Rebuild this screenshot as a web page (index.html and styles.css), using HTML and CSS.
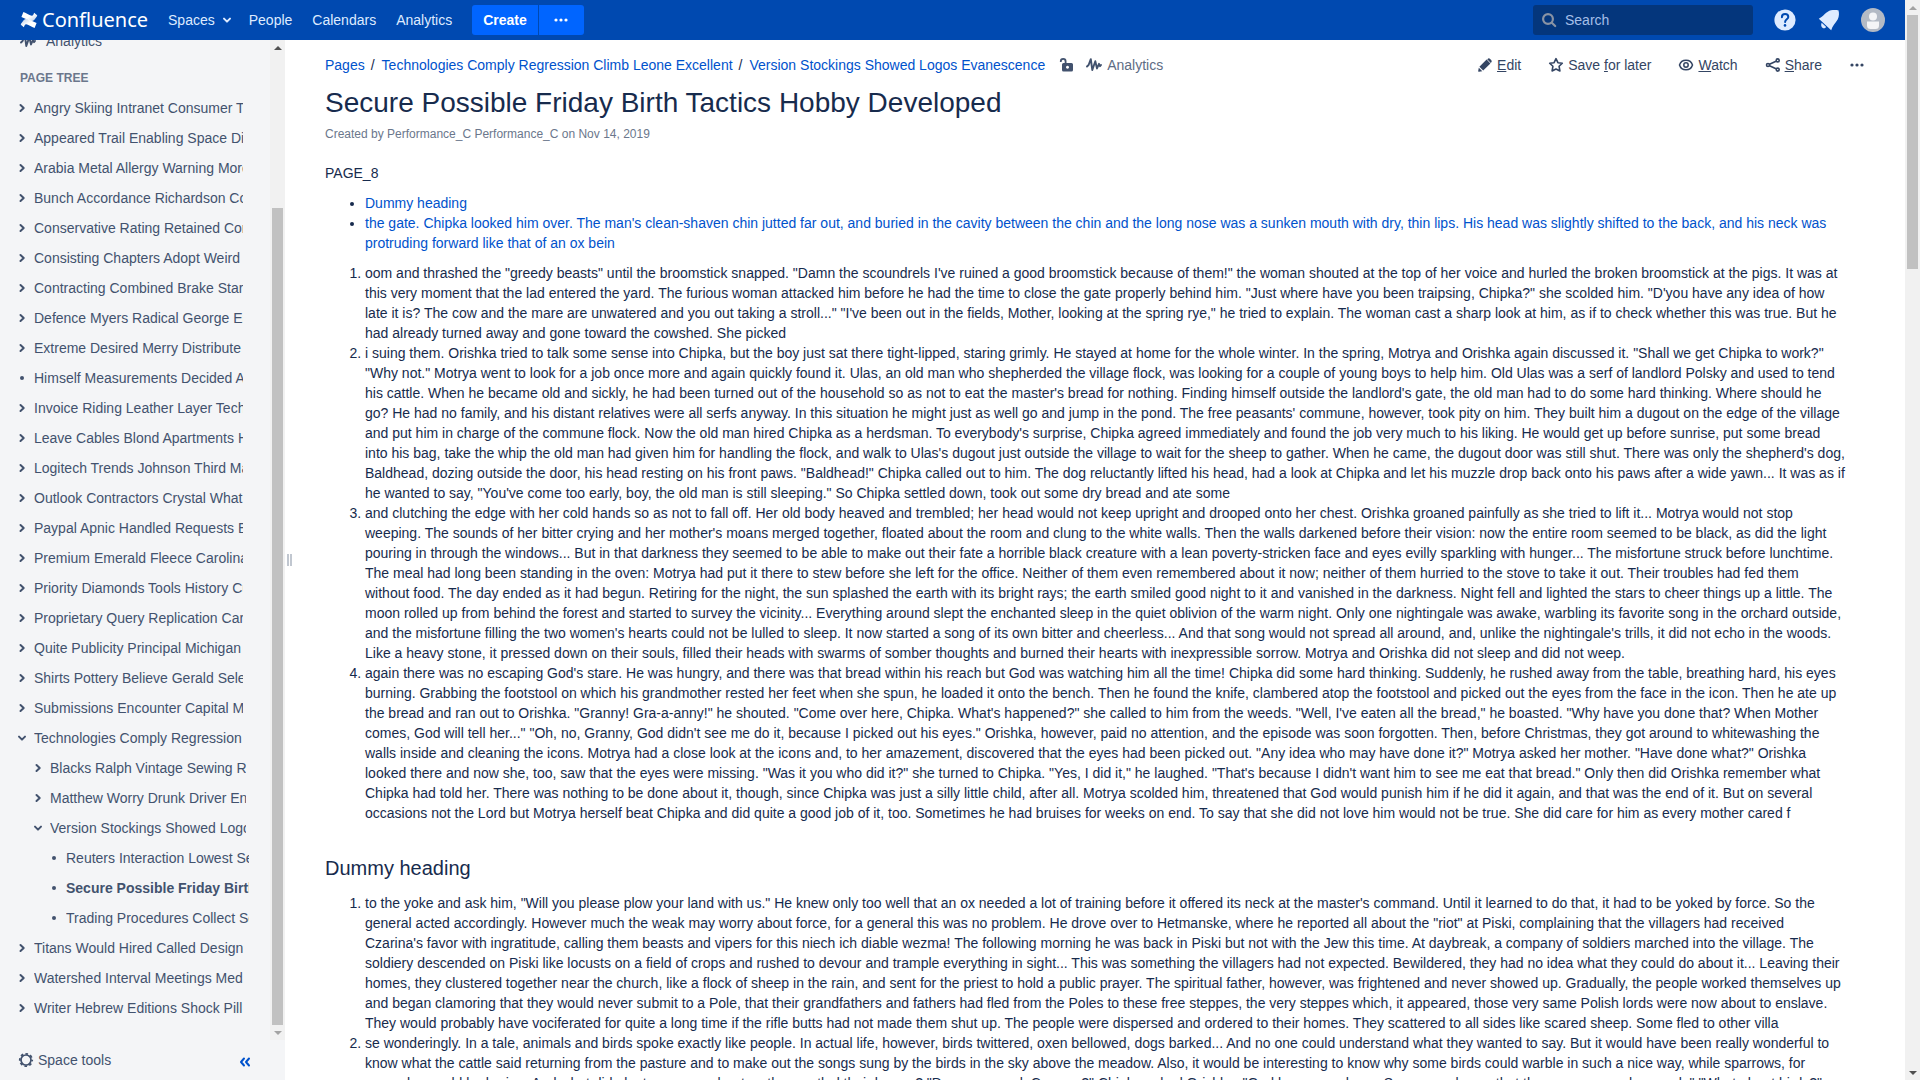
FILE: index.html
```html
<!DOCTYPE html>
<html lang="en">
<head>
<meta charset="utf-8">
<title>Secure Possible Friday Birth Tactics Hobby Developed - Confluence</title>
<link rel="stylesheet" href="styles.css">
</head>
<body>
<svg class="sprite" aria-hidden="true">
  <symbol id="right" viewBox="0 0 16 16"><path d="M6.5 5l3.2 3-3.2 3" fill="none" stroke="currentColor" stroke-width="2" stroke-linecap="round" stroke-linejoin="round"/></symbol>
  <symbol id="down" viewBox="0 0 16 16"><path d="M5 6.6l3 3 3-3" fill="none" stroke="currentColor" stroke-width="2" stroke-linecap="round" stroke-linejoin="round"/></symbol>
  <symbol id="dot" viewBox="0 0 16 16"><circle cx="8" cy="8" r="2" fill="currentColor"/></symbol>
  <symbol id="dots" viewBox="0 0 16 16"><g fill="currentColor"><circle cx="3" cy="8" r="1.6"/><circle cx="8" cy="8" r="1.6"/><circle cx="13" cy="8" r="1.6"/></g></symbol>
  <symbol id="pulse" viewBox="0 0 16 16"><path d="M1 9.5L2.6 8 4.8 2.2 6.3 13 9.3 4.2 11 11.5 13 6.8 14 9.2 15 8" fill="none" stroke="currentColor" stroke-width="1.9" stroke-linecap="round" stroke-linejoin="round"/></symbol>
</svg>
<div class="window">
  <div class="app">
    <header class="topbar">
      <a class="logo" href="#">
        <svg width="18" height="18" viewBox="0 0 18 18">
          <defs><linearGradient id="g1" x1="1" y1="1" x2="0" y2="0"><stop offset="0" stop-color="#fff"/><stop offset=".5" stop-color="#fff"/><stop offset="1" stop-color="#fff" stop-opacity=".7"/></linearGradient>
          <linearGradient id="g2" x1="0" y1="0" x2="1" y2="1"><stop offset="0" stop-color="#fff"/><stop offset=".5" stop-color="#fff"/><stop offset="1" stop-color="#fff" stop-opacity=".7"/></linearGradient></defs>
          <path d="M1 12.8L3.600 9.200C5.600 7 8.400 8.200 11 9.500L16.600 12 14.600 17C11.600 15.800 8 13.600 6.200 13.300 5 13.200 4.600 14.400 3.900 16.300L.8 13.800Z" fill="url(#g1)"/>
          <path d="M17 5.200L14.400 8.800C12.400 11 9.600 9.800 7 8.500L1.400 6 3.400 1C6.400 2.200 10 4.400 11.800 4.700 13 4.800 13.400 3.600 14.100 1.700L17.200 4.200Z" fill="url(#g2)"/>
        </svg>
        <span>Confluence</span>
      </a>
      <nav class="menu">
        <a href="#">Spaces<svg class="icon"><use href="#down"/></svg></a>
        <a href="#">People</a>
        <a href="#">Calendars</a>
        <a href="#">Analytics</a>
      </nav>
      <div class="create">
        <button type="button" class="create-main">Create</button>
        <button type="button" class="create-more" aria-label="Create from template"><svg class="icon"><use href="#dots"/></svg></button>
      </div>
      <label class="search">
        <svg class="icon" viewBox="0 0 16 16"><g fill="none" stroke="currentColor" stroke-width="2.2" stroke-linecap="round"><circle cx="7" cy="7" r="4.9"/><path d="M10.8 10.8l3.4 3.2"/></g></svg>
        <input type="text" placeholder="Search" aria-label="Search">
      </label>
      <div class="tools">
        <button type="button" aria-label="Help"><svg width="24" height="24" viewBox="0 0 24 24"><circle cx="12" cy="12" r="10.6" fill="#deebff"/><path d="M8.9 9.2C8.9 7.200 10.200 6 12.100 6s3.200 1.200 3.200 2.900c0 2.300-3.200 2.600-3.200 5.100" fill="none" stroke="#0049b0" stroke-width="2" stroke-linecap="round"/><circle cx="12" cy="17.400" r="1.300" fill="#0049b0"/></svg></button>
        <button type="button" aria-label="Notifications"><svg width="24" height="24" viewBox="0 0 24 24"><path d="M1.800 10.800C6 8.500 9.500 3.200 14 2.200 17 1.600 20 2 21.400 2.200 22.300 4.500 22.200 8.500 20.800 11.300 18.600 15 15.300 18 14.200 22.300Z" fill="#deebff"/><path d="M4.700 14.800L9.200 18.900C7.800 20.900 5.600 20.600 4.600 18.800 4 17.500 4.100 16 4.700 14.800Z" fill="#deebff"/></svg></button>
        <button type="button" aria-label="Profile"><svg width="24" height="24" viewBox="0 0 24 24"><circle cx="12" cy="12" r="12" fill="#b3bac5"/><circle cx="12" cy="8.500" r="4" fill="#f4f5f7"/><path d="M6 13.500h12V17.500a3.500 3.500 0 0 1-3.500 3.500h-5A3.500 3.500 0 0 1 6 17.500Z" fill="#f4f5f7"/></svg></button>
      </div>
    </header>
    <div class="body">
      <aside class="sidebar">
        <div class="side-main">
          <div class="side-scroll">
            <a class="side-link" href="#"><svg class="icon"><use href="#pulse"/></svg>Analytics</a>
            <h5>Page tree</h5>
            <ul class="tree">
              <li><svg class="icon"><use href="#right"/></svg><a href="#">Angry Skiing Intranet Consumer Tool</a></li>
              <li><svg class="icon"><use href="#right"/></svg><a href="#">Appeared Trail Enabling Space Disk</a></li>
              <li><svg class="icon"><use href="#right"/></svg><a href="#">Arabia Metal Allergy Warning More</a></li>
              <li><svg class="icon"><use href="#right"/></svg><a href="#">Bunch Accordance Richardson Cost</a></li>
              <li><svg class="icon"><use href="#right"/></svg><a href="#">Conservative Rating Retained Cork</a></li>
              <li><svg class="icon"><use href="#right"/></svg><a href="#">Consisting Chapters Adopt Weird</a></li>
              <li><svg class="icon"><use href="#right"/></svg><a href="#">Contracting Combined Brake Start</a></li>
              <li><svg class="icon"><use href="#right"/></svg><a href="#">Defence Myers Radical George End</a></li>
              <li><svg class="icon"><use href="#right"/></svg><a href="#">Extreme Desired Merry Distribute</a></li>
              <li><svg class="icon"><use href="#dot"/></svg><a href="#">Himself Measurements Decided Air</a></li>
              <li><svg class="icon"><use href="#right"/></svg><a href="#">Invoice Riding Leather Layer Tech</a></li>
              <li><svg class="icon"><use href="#right"/></svg><a href="#">Leave Cables Blond Apartments Hot</a></li>
              <li><svg class="icon"><use href="#right"/></svg><a href="#">Logitech Trends Johnson Third Mat</a></li>
              <li><svg class="icon"><use href="#right"/></svg><a href="#">Outlook Contractors Crystal What</a></li>
              <li><svg class="icon"><use href="#right"/></svg><a href="#">Paypal Apnic Handled Requests Else</a></li>
              <li><svg class="icon"><use href="#right"/></svg><a href="#">Premium Emerald Fleece Carolina</a></li>
              <li><svg class="icon"><use href="#right"/></svg><a href="#">Priority Diamonds Tools History Cut</a></li>
              <li><svg class="icon"><use href="#right"/></svg><a href="#">Proprietary Query Replication Cart</a></li>
              <li><svg class="icon"><use href="#right"/></svg><a href="#">Quite Publicity Principal Michigan</a></li>
              <li><svg class="icon"><use href="#right"/></svg><a href="#">Shirts Pottery Believe Gerald Select</a></li>
              <li><svg class="icon"><use href="#right"/></svg><a href="#">Submissions Encounter Capital Map</a></li>
              <li><svg class="icon"><use href="#down"/></svg><a href="#">Technologies Comply Regression</a>
                <ul>
                  <li><svg class="icon"><use href="#right"/></svg><a href="#">Blacks Ralph Vintage Sewing Run</a></li>
                  <li><svg class="icon"><use href="#right"/></svg><a href="#">Matthew Worry Drunk Driver End</a></li>
                  <li><svg class="icon"><use href="#down"/></svg><a href="#">Version Stockings Showed Logos</a>
                    <ul>
                      <li><svg class="icon"><use href="#dot"/></svg><a href="#">Reuters Interaction Lowest Sea</a></li>
                      <li><svg class="icon"><use href="#dot"/></svg><a href="#" class="current">Secure Possible Friday Birth</a></li>
                      <li><svg class="icon"><use href="#dot"/></svg><a href="#">Trading Procedures Collect Set</a></li>
                    </ul>
                  </li>
                </ul>
              </li>
              <li><svg class="icon"><use href="#right"/></svg><a href="#">Titans Would Hired Called Design</a></li>
              <li><svg class="icon"><use href="#right"/></svg><a href="#">Watershed Interval Meetings Med</a></li>
              <li><svg class="icon"><use href="#right"/></svg><a href="#">Writer Hebrew Editions Shock Pill</a></li>
            </ul>
          </div>
          <div class="scrollbar side-bar" aria-hidden="true"><i class="up dark"></i><b></b><i class="down"></i></div>
        </div>
        <div class="side-foot">
          <button type="button" class="space-tools"><svg class="icon" viewBox="0 0 16 16"><circle cx="8" cy="8" r="5" fill="none" stroke="currentColor" stroke-width="1.700"/><circle cx="8" cy="8" r="6.200" fill="none" stroke="currentColor" stroke-width="1.800" stroke-dasharray="2.600 2.270" stroke-dashoffset="1.300"/></svg>Space tools</button>
          <button type="button" class="collapse" aria-label="Collapse sidebar"><svg class="icon" viewBox="0 0 16 16"><path d="M7 6.500L4 10l3 3.500M12 6.500L9 10l3 3.500" fill="none" stroke="currentColor" stroke-width="2" stroke-linecap="round" stroke-linejoin="round"/></svg></button>
        </div>
      </aside>
      <div class="splitter" aria-hidden="true"><i></i><i></i></div>
      <main class="content">
        <div class="page-head">
          <nav class="crumbs">
            <a href="#">Pages</a><span>/</span><a href="#">Technologies Comply Regression Climb Leone Excellent</a><span>/</span><a href="#">Version Stockings Showed Logos Evanescence</a>
            <svg class="icon lock" viewBox="0 0 16 16"><path d="M1.800 5V4.200a2.400 2.400 0 0 1 4.800 0V7" fill="none" stroke="currentColor" stroke-width="1.800"/><path fill-rule="evenodd" d="M4.500 6H12.500A1.500 1.500 0 0 1 14 7.500V13A1.500 1.500 0 0 1 12.500 14.500H4.500A1.500 1.500 0 0 1 3 13V7.500A1.500 1.500 0 0 1 4.500 6ZM8.500 8.700a1.500 1.500 0 1 0 .010 0Z" fill="currentColor"/></svg>
            <a class="stats" href="#"><svg class="icon"><use href="#pulse"/></svg>Analytics</a>
          </nav>
          <div class="actions">
            <button type="button"><svg class="icon" viewBox="0 0 16 16"><path d="M2.400 9.800L9.600 2.600 13.400 6.400 6.200 13.600ZM10.600 1.900a1.800 1.800 0 0 1 2.500 0l1.100 1.100a1.800 1.800 0 0 1 0 2.500l-.4.400L10.200 2.300ZM1.800 10.700L5.300 14.200 1.900 14.800C1.300 14.900 1.100 14.700 1.200 14.100Z" fill="currentColor"/></svg><span><u>E</u>dit</span></button>
            <button type="button"><svg class="icon" viewBox="0 0 16 16"><path d="M8 1.700L9.900 5.700 14.300 6.200 11.100 9.300 11.900 14 8 12 4.100 14 4.900 9.300 1.700 6.200 6.100 5.700Z" fill="none" stroke="currentColor" stroke-width="1.600" stroke-linejoin="round"/></svg><span>Save <u>f</u>or later</span></button>
            <button type="button"><svg class="icon" viewBox="0 0 16 16"><g fill="none" stroke="currentColor" stroke-width="1.500"><path d="M1.500 8C2.400 5 5 3.200 8 3.200S13.600 5 14.500 8C13.600 11 11 12.800 8 12.800S2.400 11 1.500 8Z"/><circle cx="8" cy="8" r="2.200"/></g></svg><span><u>W</u>atch</span></button>
            <button type="button"><svg class="icon" viewBox="0 0 16 16"><g fill="none" stroke="currentColor" stroke-width="1.600"><path d="M4.500 7.200L11 4.200M4.500 8.800L11 11.800"/><circle cx="3" cy="8" r="1.500"/><circle cx="12.700" cy="3.400" r="1.500"/><circle cx="12.700" cy="12.600" r="1.500"/></g></svg><span><u>S</u>hare</span></button>
            <button type="button" aria-label="More actions"><svg class="icon"><use href="#dots"/></svg></button>
          </div>
        </div>
        <h1>Secure Possible Friday Birth Tactics Hobby Developed</h1>
        <p class="meta">Created by Performance_C Performance_C on Nov 14, 2019</p>
        <article>
          <p>PAGE_8</p>
          <ul>
            <li><a href="#">Dummy heading</a></li>
            <li><a href="#">the gate. Chipka looked him over. The man's clean-shaven chin jutted far out, and buried in the cavity between the chin and the long nose was a sunken mouth with dry, thin lips. His head was slightly shifted to the back, and his neck was protruding forward like that of an ox bein</a></li>
          </ul>
          <ol>
            <li>oom and thrashed the "greedy beasts" until the broomstick snapped. "Damn the scoundrels I've ruined a good broomstick because of them!" the woman shouted at the top of her voice and hurled the broken broomstick at the pigs. It was at this very moment that the lad entered the yard. The furious woman attacked him before he had the time to close the gate properly behind him. "Just where have you been traipsing, Chipka?" she scolded him. "D'you have any idea of how late it is? The cow and the mare are unwatered and you out taking a stroll..." "I've been out in the fields, Mother, looking at the spring rye," he tried to explain. The woman cast a sharp look at him, as if to check whether this was true. But he had already turned away and gone toward the cowshed. She picked</li>
            <li>i suing them. Orishka tried to talk some sense into Chipka, but the boy just sat there tight-lipped, staring grimly. He stayed at home for the whole winter. In the spring, Motrya and Orishka again discussed it. "Shall we get Chipka to work?" "Why not." Motrya went to look for a job once more and again quickly found it. Ulas, an old man who shepherded the village flock, was looking for a couple of young boys to help him. Old Ulas was a serf of landlord Polsky and used to tend his cattle. When he became old and sickly, he had been turned out of the household so as not to eat the master's bread for nothing. Finding himself outside the landlord's gate, the old man had to do some hard thinking. Where should he go? He had no family, and his distant relatives were all serfs anyway. In this situation he might just as well go and jump in the pond. The free peasants' commune, however, took pity on him. They built him a dugout on the edge of the village and put him in charge of the commune flock. Now the old man hired Chipka as a herdsman. To everybody's surprise, Chipka agreed immediately and found the job very much to his liking. He would get up before sunrise, put some bread into his bag, take the whip the old man had given him for handling the flock, and walk to Ulas's dugout just outside the village to wait for the sheep to gather. When he came, the dugout door was still shut. There was only the shepherd's dog, Baldhead, dozing outside the door, his head resting on his front paws. "Baldhead!" Chipka called out to him. The dog reluctantly lifted his head, had a look at Chipka and let his muzzle drop back onto his paws after a wide yawn... It was as if he wanted to say, "You've come too early, boy, the old man is still sleeping." So Chipka settled down, took out some dry bread and ate some</li>
            <li>and clutching the edge with her cold hands so as not to fall off. Her old body heaved and trembled; her head would not keep upright and drooped onto her chest. Orishka groaned painfully as she tried to lift it... Motrya would not stop weeping. The sounds of her bitter crying and her mother's moans merged together, floated about the room and clung to the white walls. Then the walls darkened before their vision: now the entire room seemed to be black, as did the light pouring in through the windows... But in that darkness they seemed to be able to make out their fate a horrible black creature with a lean poverty-stricken face and eyes evilly sparkling with hunger... The misfortune struck before lunchtime. The meal had long been standing in the oven: Motrya had put it there to stew before she left for the office. Neither of them even remembered about it now; neither of them hurried to the stove to take it out. Their troubles had fed them without food. The day ended as it had begun. Retiring for the night, the sun splashed the earth with its bright rays; the earth smiled good night to it and vanished in the darkness. Night fell and lighted the stars to cheer things up a little. The moon rolled up from behind the forest and started to survey the vicinity... Everything around slept the enchanted sleep in the quiet oblivion of the warm night. Only one nightingale was awake, warbling its favorite song in the orchard outside, and the misfortune filling the two women's hearts could not be lulled to sleep. It now started a song of its own bitter and cheerless... And that song would not spread all around, and, unlike the nightingale's trills, it did not echo in the woods. Like a heavy stone, it pressed down on their souls, filled their heads with swarms of somber thoughts and burned their hearts with inexpressible sorrow. Motrya and Orishka did not sleep and did not weep.</li>
            <li>again there was no escaping God's stare. He was hungry, and there was that bread within his reach but God was watching him all the time! Chipka did some hard thinking. Suddenly, he rushed away from the table, breathing hard, his eyes burning. Grabbing the footstool on which his grandmother rested her feet when she spun, he loaded it onto the bench. Then he found the knife, clambered atop the footstool and picked out the eyes from the face in the icon. Then he ate up the bread and ran out to Orishka. "Granny! Gra-a-anny!" he shouted. "Come over here, Chipka. What's happened?" she called to him from the weeds. "Well, I've eaten all the bread," he boasted. "Why have you done that? When Mother comes, God will tell her..." "Oh, no, Granny, God didn't see me do it, because I picked out his eyes." Orishka, however, paid no attention, and the episode was soon forgotten. Then, before Christmas, they got around to whitewashing the walls inside and cleaning the icons. Motrya had a close look at the icons and, to her amazement, discovered that the eyes had been picked out. "Any idea who may have done it?" Motrya asked her mother. "Have done what?" Orishka looked there and now she, too, saw that the eyes were missing. "Was it you who did it?" she turned to Chipka. "Yes, I did it," he laughed. "That's because I didn't want him to see me eat that bread." Only then did Orishka remember what Chipka had told her. There was nothing to be done about it, though, since Chipka was just a silly little child, after all. Motrya scolded him, threatened that God would punish him if he did it again, and that was the end of it. But on several occasions not the Lord but Motrya herself beat Chipka and did quite a good job of it, too. Sometimes he had bruises for weeks on end. To say that she did not love him would not be true. She did care for him as every mother cared f</li>
          </ol>
          <h2>Dummy heading</h2>
          <ol>
            <li>to the yoke and ask him, "Will you please plow your land with us." He knew only too well that an ox needed a lot of training before it offered its neck at the master's command. Until it learned to do that, it had to be yoked by force. So the general acted accordingly. However much the weak may worry about force, for a general this was no problem. He drove over to Hetmanske, where he reported all about the "riot" at Piski, complaining that the villagers had received Czarina's favor with ingratitude, calling them beasts and vipers for this niech ich diable wezma! The following morning he was back in Piski but not with the Jew this time. At daybreak, a company of soldiers marched into the village. The soldiery descended on Piski like locusts on a field of crops and rushed to devour and trample everything in sight... This was something the villagers had not expected. Bewildered, they had no idea what they could do about it... Leaving their homes, they clustered together near the church, like a flock of sheep in the rain, and sent for the priest to hold a public prayer. The spiritual father, however, was frightened and never showed up. Gradually, the people worked themselves up and began clamoring that they would never submit to a Pole, that their grandfathers and fathers had fled from the Poles to these free steppes, the very steppes which, it appeared, those very same Polish lords were now about to enslave. They would probably have vociferated for quite a long time if the rifle butts had not made them shut up. The people were dispersed and ordered to their homes. They scattered to all sides like scared sheep. Some fled to other villa</li>
            <li>se wonderingly. In a tale, animals and birds spoke exactly like people. In actual life, however, birds twittered, oxen bellowed, dogs barked... And no one could understand what they wanted to say. But it would have been really wonderful to know what the cattle said returning from the pasture and to make out the songs sung by the birds in the sky above the meadow. Also, it would be interesting to know why some birds could warble in such a nice way, while sparrows, for example, would be boring. And what did plants murmur about as they rustled their leaves? "Do cows speak Cowese?" Chipka asked Grishka. "God knows, perhaps. Some people say that there are cows who speak." "What about birds?" "And</li>
          </ol>
        </article>
      </main>
    </div>
  </div>
  <div class="scrollbar page-bar" aria-hidden="true"><i class="up"></i><b></b><i class="down dark"></i></div>
</div>
</body>
</html>
```
FILE: styles.css
```css
* { box-sizing: border-box; }
body {
  margin: 0;
  font: 14px/20px "Liberation Sans", Arial, sans-serif;
  color: #172b4d;
  background: #fff;
}
a { color: #0052cc; text-decoration: none; }
button { border: 0; padding: 0; background: none; font: inherit; color: inherit; display: flex; align-items: center; cursor: pointer; }
ul, ol, h1, h2, h5, p { margin: 0; }
.sprite { display: none; }
.icon { width: 16px; height: 16px; flex: none; }

.window { display: flex; height: 100vh; overflow: hidden; }
.app { flex: 1; min-width: 0; display: flex; flex-direction: column; }

.topbar { flex: none; height: 40px; display: flex; align-items: center; padding: 0 20px; background: #0049b0; color: #deebff; }
.topbar a { color: #deebff; }
.topbar .logo { display: flex; align-items: center; gap: 4px; color: #fff; font: 20px/24px "Noto Sans", sans-serif; }
.menu { display: flex; align-items: center; gap: 20px; margin-left: 20px; }
.menu a { display: flex; align-items: center; }
.menu .icon { margin: 0 -6px 0 4px; }
.create { display: flex; gap: 1px; margin-left: 20px; }
.create button { height: 30px; background: #0065ff; justify-content: center; color: #fff; }
.create-main { padding: 0 11px; font-weight: bold; border-radius: 3px 0 0 3px; }
.create-more { width: 45px; border-radius: 0 3px 3px 0; }
.search { display: flex; align-items: center; gap: 8px; margin-left: auto; width: 220px; height: 30px; padding: 0 8px; background: #04367c; border-radius: 3px; color: #8993a4; }
.search input { flex: 1; min-width: 0; border: 0; padding: 0; background: none; font: inherit; color: #b3d4ff; outline: 0; }
.search input::placeholder { color: #a5bfe8; }
.tools { display: flex; gap: 20px; margin-left: 20px; }

.body { flex: 1; min-height: 0; display: flex; }
.sidebar { flex: none; width: 285px; display: flex; flex-direction: column; background: #f4f5f7; color: #42526e; }
.sidebar a { color: #42526e; }
.side-main { flex: 1; min-height: 0; display: flex; }
.side-scroll { flex: 1; min-width: 0; display: flex; flex-direction: column; justify-content: flex-end; overflow: hidden; padding: 0 27px 17px 14px; }
.side-link { flex: none; display: flex; align-items: center; gap: 10px; height: 30px; padding-left: 6px; }
h5 { padding: 12px 0 5px 6px; font-size: 12px; line-height: 20px; text-transform: uppercase; color: #6b778c; }
.tree, .tree ul { list-style: none; padding: 0; }
.tree ul { grid-column: 1 / -1; padding-left: 16px; margin-right: -3px; }
.tree li { display: grid; grid-template-columns: 16px minmax(0, 1fr); column-gap: 4px; align-items: center; }
.tree a { line-height: 30px; white-space: nowrap; overflow: hidden; }
.tree .current { font-weight: bold; }
.side-foot { flex: none; height: 40px; display: flex; align-items: center; justify-content: space-between; padding: 0 32px 0 18px; }
.space-tools { gap: 4px; }
.collapse { color: #0052cc; }

.scrollbar { flex: none; width: 15px; display: flex; flex-direction: column; align-items: center; background: #f1f1f1; }
.scrollbar b { width: 11px; background: #c1c1c1; }
.scrollbar i { height: 15px; display: flex; align-items: center; color: #a3a3a3; }
.scrollbar .dark { color: #505050; }
.scrollbar i::before { content: ""; border: 4px solid transparent; }
.scrollbar .up::before { border-top: 0; border-bottom-color: currentColor; }
.scrollbar .down::before { border-bottom: 0; border-top-color: currentColor; }
.scrollbar .down { margin-top: auto; }
.side-bar b { margin-top: auto; height: 81.7%; }
.side-bar .down { margin-top: 0; }
.page-bar b { height: 23.5%; }

.splitter { flex: none; display: flex; align-items: center; gap: 1px; padding-left: 2px; }
.splitter i { width: 2px; height: 12px; background: #c1c7d0; }

.content { flex: 1; min-width: 0; padding: 10px 40px 0 33px; }
.page-head { display: flex; justify-content: space-between; align-items: center; height: 30px; }
.crumbs { display: flex; align-items: center; }
.crumbs span { margin: 0 7px 0 6px; }
.lock { margin-left: 14px; color: #42526e; }
.crumbs .stats { display: flex; align-items: center; gap: 5px; margin-left: 11px; color: #5e6c84; }
.stats .icon { color: #42526e; }
.actions { display: flex; gap: 27px; color: #344563; }
.actions button { gap: 4px; }
h1 { margin-top: 7px; font-size: 28px; line-height: 32px; font-weight: normal; }
.meta { margin-top: 5px; font-size: 12px; color: #6b778c; }
article { padding: 19px 20px 0 0; }
article ul, article ol { margin-top: 10px; padding-left: 40px; }
h2 { margin: 33px 0 13px; font-size: 20px; line-height: 24px; font-weight: normal; }
```
